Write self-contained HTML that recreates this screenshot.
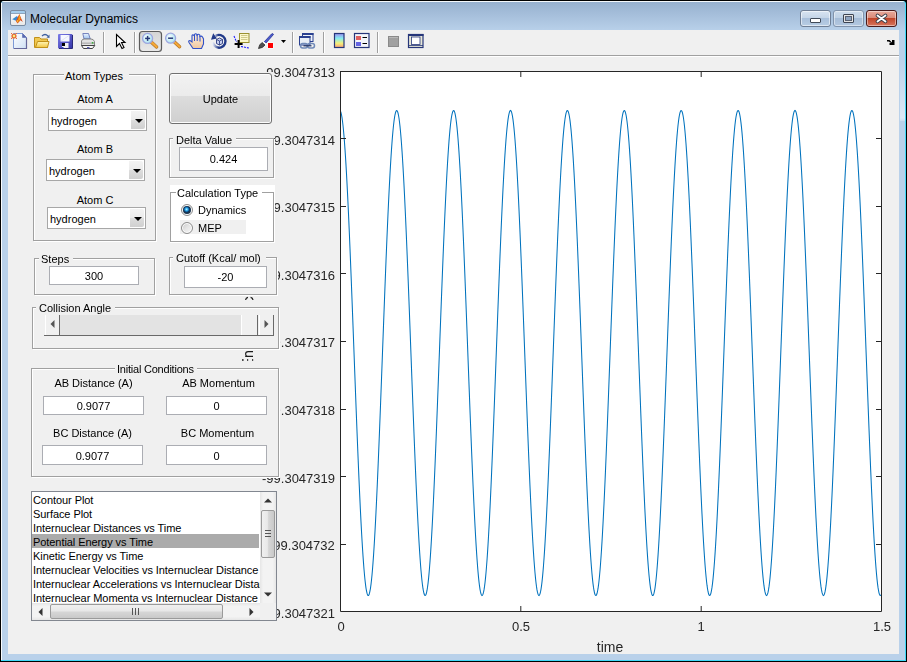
<!DOCTYPE html><html><head><meta charset="utf-8"><style>
*{box-sizing:border-box}
body{margin:0;width:907px;height:662px;overflow:hidden;position:relative;background:#000;font-family:"Liberation Sans", sans-serif}
.abs{position:absolute}
.pnl{position:absolute;border-top:1px solid #a0a0a0;border-left:1px solid #a0a0a0;box-shadow:inset 1px 1px 0 #fff, 1px 1px 0 #fff;}
.pnl2{position:absolute}
.ptitle{position:absolute;font-size:11px;line-height:13px;background:#f0f0f0;padding:0 2px;color:#000;white-space:nowrap}
.lbl{position:absolute;font-size:11px;line-height:13px;color:#000;white-space:nowrap}
.edit{position:absolute;background:#fff;border:1px solid #a0a0a0;font-size:11px;text-align:center;color:#000;box-shadow:inset 0 0 0 0 #fff}
.popup{position:absolute;background:#fff;border:1px solid #a0a0a0;font-size:11px;color:#000}
.pbtn{position:absolute;right:0;top:0;width:17px;height:100%;background:linear-gradient(#f2f2f2,#d5d5d5)}
.tick{position:absolute;font-size:13px;line-height:13px;color:#262626;white-space:nowrap;will-change:transform}
</style></head><body>
<div class="abs" style="left:0;top:0;width:907px;height:662px;background:#000;border-radius:4px 4px 0 0"></div>
<div class="abs" style="left:1px;top:1px;width:905px;height:660px;background:#40d8f8;border-radius:3px 3px 0 0"></div>
<div class="abs" style="left:1px;top:1px;width:904px;height:659px;background:linear-gradient(#f4f8fb 0,#f4f8fb 1px,#97b1cf 1px,#a6bfdb 14px,#b9d1ea 30px,#b9d1ea 100%);border-radius:3px 3px 0 0"></div>
<div class="abs" style="left:2px;top:30px;width:1px;height:630px;background:#b9d1ea"></div>
<div class="abs" style="left:1px;top:3px;width:1px;height:657px;background:#f8fbfd"></div>
<div class="abs" style="left:8px;top:30px;width:891px;height:624px;background:#f0f0f0"></div>
<div class="abs" style="left:900px;top:60px;width:5px;height:61px;background:linear-gradient(#bcd3eb,#dbe8f5 95%,#c9dcef)"></div>

<div class="abs" style="left:10px;top:10px;width:16px;height:16px;background:linear-gradient(#a4cdee 0,#a4cdee 2px,#8ea4bc 2px,#8ea4bc 3px,#fbfbfb 3px,#e8e8e8 100%);border:1px solid #7a8ca2;border-radius:2px"></div>
<svg class="abs" style="left:10px;top:10px" width="16" height="16"><path d="M2.2 9.3 L7 5.9 L8.3 8 L6 10.7 Z" fill="#3a8ad0"/><path d="M5.9 11 L9.4 4 L11 8 L12.8 12 L10.5 10.3 L7.5 13.5 Z" fill="#d9481a"/><path d="M9.4 4.5 L10.6 8.5 L8.6 12.5 L8.2 9 Z" fill="#f2a21c"/><path d="M6.5 11 L8 9.5 L8 12.8 Z" fill="#f6c030"/></svg>
<div class="abs" style="left:30px;top:12px;font-size:12px;line-height:15px;color:#000;white-space:nowrap">Molecular Dynamics</div>

<div class="abs" style="left:800px;top:10px;width:31px;height:17px;border:1px solid #6f7f95;border-radius:3px;background:linear-gradient(#d8e4f1 0,#c3d4e7 50%,#a9c0db 50%,#b8cde4 100%);box-shadow:inset 0 0 0 1px rgba(255,255,255,.55)"></div>
<div class="abs" style="left:810px;top:18px;width:11px;height:5px;background:#fff;border:1px solid #404a58;border-radius:1px"></div>
<div class="abs" style="left:833px;top:10px;width:31px;height:17px;border:1px solid #8193ab;border-radius:3px;background:linear-gradient(#cddcec 0,#bdd0e5 50%,#a6bdd8 50%,#b3c8e0 100%);box-shadow:inset 0 0 0 1px rgba(255,255,255,.45)"></div>
<div class="abs" style="left:843px;top:14px;width:11px;height:9px;background:#e4e4e4;border:1px solid #3d4452;border-radius:1px"></div>
<div class="abs" style="left:846px;top:17px;width:5px;height:3px;background:#8ea4c2;box-shadow:0 0 0 1px #5a6272"></div>
<div class="abs" style="left:866px;top:10px;width:31px;height:17px;border:1px solid #4a1a1a;border-radius:3px;background:linear-gradient(#e9a99b 0,#d98876 50%,#c0452a 50%,#d8755d 100%);box-shadow:inset 0 0 0 1px rgba(255,255,255,.45)"></div>
<svg class="abs" style="left:875px;top:13px" width="13" height="11"><path d="M2.5 2.5 L10.5 8.5 M2.5 8.5 L10.5 2.5" stroke="#3a3f4a" stroke-width="3.6" fill="none" stroke-linecap="round"/><path d="M2.5 2.5 L10.5 8.5 M2.5 8.5 L10.5 2.5" stroke="#fff" stroke-width="1.8" fill="none" stroke-linecap="round"/></svg>

<div class="abs" style="left:8px;top:55px;width:891px;height:1px;background:#a0a0a0"></div><div class="abs" style="left:8px;top:56px;width:891px;height:1px;background:#fff"></div>
<svg class="abs" style="left:0;top:0" width="907" height="57" shape-rendering="geometricPrecision">
<defs>
<linearGradient id="pg" x1="0" y1="0" x2="1" y2="1"><stop offset="0" stop-color="#ffffff"/><stop offset="1" stop-color="#cfe0f4"/></linearGradient>
<linearGradient id="fg" x1="0" y1="0" x2="0" y2="1"><stop offset="0" stop-color="#fff6b8"/><stop offset="1" stop-color="#f2c640"/></linearGradient>
<linearGradient id="flg" x1="0" y1="0" x2="1" y2="1"><stop offset="0" stop-color="#7c7ce8"/><stop offset="1" stop-color="#3434a8"/></linearGradient>
<linearGradient id="cbg" x1="0" y1="0" x2="0" y2="1"><stop offset="0" stop-color="#9a8ef0"/><stop offset=".35" stop-color="#86eef0"/><stop offset=".7" stop-color="#f4f07a"/><stop offset="1" stop-color="#f8a078"/></linearGradient>
<linearGradient id="btng" x1="0" y1="0" x2="0" y2="1"><stop offset="0" stop-color="#d4d4d4"/><stop offset="1" stop-color="#e9e9e9"/></linearGradient>
<radialGradient id="lens" cx=".4" cy=".4" r=".6"><stop offset="0" stop-color="#ffffff"/><stop offset="1" stop-color="#a8e4f0"/></radialGradient>
<linearGradient id="hand" x1="0" y1="0" x2="0" y2="1"><stop offset="0" stop-color="#fdf0e0"/><stop offset="1" stop-color="#f0c8a0"/></linearGradient>
</defs>
<rect x="103" y="32" width="1" height="21" fill="#a0a0a0"/><rect x="104" y="32" width="1" height="21" fill="#fff"/>
<rect x="134" y="32" width="1" height="21" fill="#a0a0a0"/><rect x="135" y="32" width="1" height="21" fill="#fff"/>
<rect x="292" y="32" width="1" height="21" fill="#a0a0a0"/><rect x="293" y="32" width="1" height="21" fill="#fff"/>
<rect x="323" y="32" width="1" height="21" fill="#a0a0a0"/><rect x="324" y="32" width="1" height="21" fill="#fff"/>
<rect x="377" y="32" width="1" height="21" fill="#a0a0a0"/><rect x="378" y="32" width="1" height="21" fill="#fff"/>
<path d="M13.5 33.5 H22.5 L26.5 37.5 V48.5 H13.5 Z" fill="url(#pg)" stroke="#7d9ad6"/>
<path d="M26.5 38 V48.5 H14" fill="none" stroke="#65679a" stroke-width="1.2"/>
<path d="M22.5 33.5 V37.5 H26.5 Z" fill="#5a6ab0" stroke="#5a6ab0" stroke-width=".6"/>
<g fill="#e8703a"><circle cx="14" cy="36" r="2.6"/><rect x="11" y="33" width="1" height="1"/><rect x="16" y="33" width="1" height="1"/><rect x="11" y="38" width="1" height="1"/><rect x="16" y="38" width="1" height="1"/></g><circle cx="14" cy="36" r="1.2" fill="#f8f080"/>
<path d="M34.5 37.5 H39.5 L41 39 H47.5 V47.5 H34.5 Z" fill="#f0c850" stroke="#c0901a"/>
<path d="M35.5 47.5 L37.5 41.5 H49 L47.5 47.5 Z" fill="url(#fg)" stroke="#c0901a"/>
<path d="M42 36 Q45 33 48 36" fill="none" stroke="#4060a0" stroke-width="1.2"/><path d="M46.5 37.5 L49.5 34.5 L49.5 38 Z" fill="#4060a0"/>
<rect x="58" y="34" width="14.5" height="14.5" rx="1" fill="url(#flg)"/>
<path d="M72.5 35 V48.5 H59" fill="none" stroke="#2a2a78" stroke-width="1"/>
<rect x="60.5" y="35" width="9" height="6.5" fill="#f6f8ff"/><path d="M61 41 L69 35.5" stroke="#d8dcf0" stroke-width=".8"/>
<rect x="62" y="43" width="6.5" height="5" fill="#f0f0f4"/><rect x="62" y="43" width="3" height="3" fill="#000"/><rect x="62" y="47" width="1.5" height="1.5" fill="#3040c0"/>
<defs><linearGradient id="ppr" x1="0" y1="0" x2="0" y2="1"><stop offset="0" stop-color="#eaf4ff"/><stop offset="1" stop-color="#9cc0f0"/></linearGradient></defs>
<path d="M82.8 33.5 H88.5 L90.3 39 H84 Z" fill="url(#ppr)" stroke="#5a6ab0" stroke-width=".8"/>
<path d="M81.5 41 Q82 39 84.5 39 H91 Q93.5 39 94.5 41.5 V45.5 H81.5 Z" fill="#e2e2e2" stroke="#7a7a7a" stroke-width=".9"/>
<path d="M82 43.2 H94" stroke="#b4b4b4" stroke-width="1.4"/>
<path d="M81.5 45.5 L83.5 48.5 H92.5 L94.8 45.5 Z" fill="#f6f6f6" stroke="#404040" stroke-width="1"/>
<rect x="91.8" y="42" width="1.6" height="1.6" fill="#40b040"/><rect x="87" y="47" width="2.5" height="1.5" fill="#5a60b0"/>
<path d="M116.5 34.5 V46.5 L119.5 43.5 L122 48.5 L124 47.5 L121.5 42.5 H125 Z" fill="#fff" stroke="#000" stroke-width="1.1" stroke-linejoin="miter"/>
<rect x="139.5" y="31.5" width="22" height="20" rx="3" fill="url(#btng)" stroke="#5c5c5c" stroke-width="1.2"/>
<path d="M150.6 41.4 L156.6 46.9" stroke="#b07020" stroke-width="3.4" stroke-linecap="round"/><path d="M150.6 41.4 L156.6 46.9" stroke="#f4a838" stroke-width="2.2" stroke-linecap="round"/><circle cx="147.6" cy="38.4" r="5" fill="url(#lens)" stroke="#9ea6e0" stroke-width="1.3"/><path d="M145.1 38.4 H150.1" stroke="#253a78" stroke-width="1.5"/><path d="M147.6 35.9 V40.9" stroke="#253a78" stroke-width="1.5"/>
<path d="M173.6 41.2 L179.6 46.7" stroke="#b07020" stroke-width="3.4" stroke-linecap="round"/><path d="M173.6 41.2 L179.6 46.7" stroke="#f4a838" stroke-width="2.2" stroke-linecap="round"/><circle cx="170.6" cy="38.2" r="5" fill="url(#lens)" stroke="#9ea6e0" stroke-width="1.3"/><path d="M168.1 38.2 H173.1" stroke="#253a78" stroke-width="1.5"/>
<path d="M193 48.5 L189 42.5 Q188 40.5 190 40.5 L192 42 V36 Q192 34.5 193.5 35 L194.5 36 V34.5 Q195.5 33 197 34.5 V35 Q198.5 33.5 199.8 35 V36.5 Q201.5 35.5 202.5 37 L203.5 39 V44 L201.5 48.5 Z" fill="url(#hand)" stroke="#3050c8" stroke-width="1.1"/>
<path d="M194.5 36 V41 M197.2 35 V41 M200 36.5 V41.5" stroke="#3050c8" stroke-width="1"/>
<defs><linearGradient id="rotg" x1="0" y1="0" x2="1" y2="0"><stop offset="0" stop-color="#e8ecf8"/><stop offset=".45" stop-color="#223a8a"/></linearGradient></defs>
<path d="M215.5 36 A6.4 6.4 0 1 1 212.8 42.5" fill="none" stroke="url(#rotg)" stroke-width="2.4"/>
<path d="M213.2 33.2 L211 39.8 L217 38.6 Z" fill="#223a8a"/>
<path d="M216.5 39.5 L219.5 38 L222.5 39.5 V43.5 L219.5 45 L216.5 43.5 Z" fill="#c8d0f0" stroke="#2a3a80" stroke-width=".9"/><path d="M216.5 39.5 L219.5 41 L222.5 39.5 M219.5 41 V45" stroke="#2a3a80" stroke-width=".8" fill="none"/>
<rect x="239.5" y="33.5" width="9.5" height="9" fill="#fcf8cc" stroke="#9a9030"/>
<path d="M241 35.5 H247.5 M241 37.5 H247.5 M241 39.5 H247.5" stroke="#c4bc78" stroke-width=".8"/>
<path d="M234 36 L236.5 42 M241 46.5 L249 48" stroke="#1a1aff" stroke-width="1.1" stroke-dasharray="2 1"/>
<path d="M238.6 40 V48 M234.6 44 H242.6" stroke="#000" stroke-width="2"/>
<path d="M264 42 L271.5 34 Q273 33 273.5 34.5 L266 43 Z" fill="#4a5ad0" stroke="#2a3490" stroke-width=".8"/>
<path d="M263.5 42 L266 44.5" stroke="#fff" stroke-width="1.2"/>
<path d="M258.5 48.5 Q259 44.5 262 42.5 L265 45 Q263 48 258.5 48.5 Z" fill="#505050" stroke="#303030" stroke-width=".8"/>
<rect x="267.5" y="42.5" width="6" height="6" fill="#fff"/><rect x="268" y="43" width="5" height="5" fill="#ff0000"/>
<path d="M281 40 H286 L283.5 43 Z" fill="#000"/>
<rect x="302.5" y="33.5" width="10.5" height="8" fill="#f0f4fa" stroke="#2a4090"/><rect x="302" y="33" width="11.5" height="2" fill="#2a4090"/>
<rect x="299.5" y="36.5" width="10.5" height="8.5" fill="#e8eef6" stroke="#2a4090"/><rect x="299" y="36" width="11.5" height="2" fill="#2a4090"/>
<rect x="300.5" y="43.5" width="7" height="4.5" rx="2.2" fill="none" stroke="#708ab8" stroke-width="1.5"/><rect x="307.5" y="43.5" width="7" height="4.5" rx="2.2" fill="none" stroke="#708ab8" stroke-width="1.5"/><path d="M303.5 45.8 H311.5" stroke="#203060" stroke-width="1.2"/>
<rect x="334.5" y="33.5" width="9.5" height="14" fill="url(#cbg)" stroke="#26367a" stroke-width="1.2"/>
<rect x="354.5" y="33.5" width="14.5" height="14" fill="#f4f6fb" stroke="#26367a" stroke-width="1.2"/>
<rect x="356" y="36" width="5" height="4" fill="#e06060"/><rect x="356" y="42" width="5" height="4" fill="#6464e4"/><path d="M362.5 37.5 H367 M362.5 43.5 H367" stroke="#000" stroke-width="1.1"/>
<rect x="388.5" y="36.5" width="10" height="10" fill="#a0a0a0" stroke="#8a8a8a"/><path d="M389 37.5 H398" stroke="#b8b8b8"/>
<rect x="408.5" y="34.5" width="14.5" height="13" fill="#e8e8d8" stroke="#26367a" stroke-width="1.2"/><rect x="408" y="34" width="15.5" height="2" fill="#26367a"/>
<rect x="411.5" y="37" width="8.5" height="7.5" fill="#fff" stroke="#26367a" stroke-width=".8"/><path d="M409 45.5 H423" stroke="#26367a" stroke-width=".8"/>
<path d="M887 40 H889.5 L892 42.5 V40 H894.5 V45 H889.5 V42.8 H891.3 L888.5 41.5 H887 Z" fill="#000"/>
</svg>
<div class="abs" style="left:340px;top:71px;width:542px;height:541px;background:#fff"></div>
<svg class="abs" style="left:0;top:0" width="907" height="662">
<polyline points="340.50,111.22 341.00,112.63 341.50,114.76 342.00,117.62 342.50,121.20 343.00,125.48 343.50,130.46 344.00,136.12 344.50,142.43 345.00,149.39 345.50,156.97 346.00,165.15 346.50,173.90 347.00,183.19 347.50,193.00 348.00,203.30 348.50,214.06 349.00,225.24 349.50,236.81 350.00,248.73 350.50,260.97 351.00,273.49 351.50,286.26 352.00,299.23 352.50,312.36 353.00,325.61 353.50,338.95 354.00,352.33 354.50,365.71 355.00,379.06 355.50,392.32 356.00,405.47 356.50,418.45 357.00,431.24 357.50,443.79 358.00,456.06 358.50,468.01 359.00,479.62 359.50,490.84 360.00,501.64 360.50,511.99 361.00,521.85 361.50,531.20 362.00,540.00 362.50,548.24 363.00,555.88 363.50,562.90 364.00,569.28 364.50,575.00 365.00,580.05 365.50,584.40 366.00,588.05 366.50,590.99 367.00,593.19 367.50,594.67 368.00,595.41 368.50,595.41 369.00,594.67 369.50,593.19 370.00,590.99 370.50,588.05 371.00,584.40 371.50,580.05 372.00,575.00 372.50,569.28 373.00,562.90 373.50,555.88 374.00,548.24 374.50,540.00 375.00,531.20 375.50,521.85 376.00,511.99 376.50,501.64 377.00,490.84 377.50,479.62 378.00,468.01 378.50,456.06 379.00,443.79 379.50,431.24 380.00,418.45 380.50,405.47 381.00,392.32 381.50,379.06 382.00,365.71 382.50,352.33 383.00,338.95 383.50,325.61 384.00,312.36 384.50,299.23 385.00,286.26 385.50,273.49 386.00,260.97 386.50,248.73 387.00,236.81 387.50,225.24 388.00,214.06 388.50,203.30 389.00,193.00 389.50,183.19 390.00,173.90 390.50,165.15 391.00,156.97 391.50,149.39 392.00,142.43 392.50,136.12 393.00,130.46 393.50,125.48 394.00,121.20 394.50,117.62 395.00,114.76 395.50,112.63 396.00,111.22 396.50,110.56 397.00,110.63 397.50,111.45 398.00,112.99 398.50,115.27 399.00,118.28 399.50,122.00 400.00,126.42 400.50,131.54 401.00,137.33 401.50,143.77 402.00,150.86 402.50,158.56 403.00,166.85 403.50,175.71 404.00,185.11 404.50,195.03 405.00,205.42 405.50,216.26 406.00,227.52 406.50,239.17 407.00,251.16 407.50,263.46 408.00,276.03 408.50,288.84 409.00,301.84 409.50,315.00 410.00,328.27 410.50,341.62 411.00,355.01 411.50,368.39 412.00,381.72 412.50,394.96 413.00,408.08 413.50,421.03 414.00,433.77 414.50,446.26 415.00,458.48 415.50,470.36 416.00,481.90 416.50,493.04 417.00,503.75 417.50,514.00 418.00,523.76 418.50,533.00 419.00,541.70 419.50,549.81 420.00,557.33 420.50,564.23 421.00,570.48 421.50,576.07 422.00,580.98 422.50,585.19 423.00,588.70 423.50,591.49 424.00,593.55 424.50,594.88 425.00,595.47 425.50,595.32 426.00,594.43 426.50,592.81 427.00,590.46 427.50,587.38 428.00,583.59 428.50,579.10 429.00,573.91 429.50,568.06 430.00,561.55 430.50,554.40 431.00,546.64 431.50,538.29 432.00,529.37 432.50,519.92 433.00,509.96 433.50,499.52 434.00,488.63 434.50,477.33 435.00,465.65 435.50,453.63 436.00,441.30 436.50,428.70 437.00,415.87 437.50,402.85 438.00,389.68 438.50,376.39 439.00,363.04 439.50,349.65 440.00,336.28 440.50,322.95 441.00,309.72 441.50,296.62 442.00,283.69 442.50,270.97 443.00,258.50 443.50,246.32 444.00,234.47 444.50,222.97 445.00,211.87 445.50,201.21 446.00,191.00 446.50,181.29 447.00,172.10 447.50,163.47 448.00,155.41 448.50,147.95 449.00,141.12 449.50,134.93 450.00,129.41 450.50,124.57 451.00,120.43 451.50,116.99 452.00,114.28 452.50,112.29 453.00,111.03 453.50,110.51 454.00,110.74 454.50,111.70 455.00,113.39 455.50,115.82 456.00,118.97 456.50,122.83 457.00,127.39 457.50,132.64 458.00,138.56 458.50,145.14 459.00,152.35 459.50,160.17 460.00,168.58 460.50,177.55 461.00,187.06 461.50,197.07 462.00,207.55 462.50,218.48 463.00,229.82 463.50,241.54 464.00,253.59 464.50,265.95 465.00,278.57 465.50,291.42 466.00,304.46 466.50,317.65 467.00,330.94 467.50,344.30 468.00,357.69 468.50,371.06 469.00,384.38 469.50,397.60 470.00,410.68 470.50,423.59 471.00,436.29 471.50,448.73 472.00,460.88 472.50,472.70 473.00,484.16 473.50,495.21 474.00,505.84 474.50,515.99 475.00,525.65 475.50,534.79 476.00,543.37 476.50,551.37 477.00,558.76 477.50,565.53 478.00,571.65 478.50,577.10 479.00,581.88 479.50,585.95 480.00,589.31 480.50,591.96 481.00,593.87 481.50,595.05 482.00,595.50 482.50,595.20 483.00,594.17 483.50,592.40 484.00,589.90 484.50,586.68 485.00,582.75 485.50,578.11 486.00,572.80 486.50,566.81 487.00,560.17 487.50,552.89 488.00,545.01 488.50,536.55 489.00,527.52 489.50,517.97 490.00,507.91 490.50,497.37 491.00,486.40 491.50,475.02 492.00,463.27 492.50,451.18 493.00,438.80 493.50,426.15 494.00,413.28 494.50,400.23 495.00,387.03 495.50,373.73 496.00,360.36 496.50,346.98 497.00,333.61 497.50,320.30 498.00,307.09 498.50,294.02 499.00,281.13 499.50,268.45 500.00,256.04 500.50,243.92 501.00,232.14 501.50,220.72 502.00,209.70 502.50,199.13 503.00,189.02 503.50,179.41 504.00,170.33 504.50,161.81 505.00,153.87 505.50,146.53 506.00,139.83 506.50,133.77 507.00,128.39 507.50,123.69 508.00,119.68 508.50,116.39 509.00,113.82 509.50,111.98 510.00,110.87 510.50,110.50 511.00,110.87 511.50,111.98 512.00,113.82 512.50,116.39 513.00,119.68 513.50,123.69 514.00,128.39 514.50,133.77 515.00,139.83 515.50,146.53 516.00,153.87 516.50,161.81 517.00,170.33 517.50,179.41 518.00,189.02 518.50,199.13 519.00,209.70 519.50,220.72 520.00,232.14 520.50,243.92 521.00,256.04 521.50,268.45 522.00,281.13 522.50,294.02 523.00,307.09 523.50,320.30 524.00,333.61 524.50,346.98 525.00,360.36 525.50,373.73 526.00,387.03 526.50,400.23 527.00,413.28 527.50,426.15 528.00,438.80 528.50,451.18 529.00,463.27 529.50,475.02 530.00,486.40 530.50,497.37 531.00,507.91 531.50,517.97 532.00,527.52 532.50,536.55 533.00,545.01 533.50,552.89 534.00,560.17 534.50,566.81 535.00,572.80 535.50,578.11 536.00,582.75 536.50,586.68 537.00,589.90 537.50,592.40 538.00,594.17 538.50,595.20 539.00,595.50 539.50,595.05 540.00,593.87 540.50,591.96 541.00,589.31 541.50,585.95 542.00,581.88 542.50,577.10 543.00,571.65 543.50,565.53 544.00,558.76 544.50,551.37 545.00,543.37 545.50,534.79 546.00,525.65 546.50,515.99 547.00,505.84 547.50,495.21 548.00,484.16 548.50,472.70 549.00,460.88 549.50,448.73 550.00,436.29 550.50,423.59 551.00,410.68 551.50,397.60 552.00,384.38 552.50,371.06 553.00,357.69 553.50,344.30 554.00,330.94 554.50,317.65 555.00,304.46 555.50,291.42 556.00,278.57 556.50,265.95 557.00,253.59 557.50,241.54 558.00,229.82 558.50,218.48 559.00,207.55 559.50,197.07 560.00,187.06 560.50,177.55 561.00,168.58 561.50,160.17 562.00,152.35 562.50,145.14 563.00,138.56 563.50,132.64 564.00,127.39 564.50,122.83 565.00,118.97 565.50,115.82 566.00,113.39 566.50,111.70 567.00,110.74 567.50,110.51 568.00,111.03 568.50,112.29 569.00,114.28 569.50,116.99 570.00,120.43 570.50,124.57 571.00,129.41 571.50,134.93 572.00,141.12 572.50,147.95 573.00,155.41 573.50,163.47 574.00,172.10 574.50,181.29 575.00,191.00 575.50,201.21 576.00,211.87 576.50,222.97 577.00,234.47 577.50,246.32 578.00,258.50 578.50,270.97 579.00,283.69 579.50,296.62 580.00,309.72 580.50,322.95 581.00,336.28 581.50,349.65 582.00,363.04 582.50,376.39 583.00,389.68 583.50,402.85 584.00,415.87 584.50,428.70 585.00,441.30 585.50,453.63 586.00,465.65 586.50,477.33 587.00,488.63 587.50,499.52 588.00,509.96 588.50,519.92 589.00,529.37 589.50,538.29 590.00,546.64 590.50,554.40 591.00,561.55 591.50,568.06 592.00,573.91 592.50,579.10 593.00,583.59 593.50,587.38 594.00,590.46 594.50,592.81 595.00,594.43 595.50,595.32 596.00,595.47 596.50,594.88 597.00,593.55 597.50,591.49 598.00,588.70 598.50,585.19 599.00,580.98 599.50,576.07 600.00,570.48 600.50,564.23 601.00,557.33 601.50,549.81 602.00,541.70 602.50,533.00 603.00,523.76 603.50,514.00 604.00,503.75 604.50,493.04 605.00,481.90 605.50,470.36 606.00,458.48 606.50,446.26 607.00,433.77 607.50,421.03 608.00,408.08 608.50,394.96 609.00,381.72 609.50,368.39 610.00,355.01 610.50,341.62 611.00,328.27 611.50,315.00 612.00,301.84 612.50,288.84 613.00,276.03 613.50,263.46 614.00,251.16 614.50,239.17 615.00,227.52 615.50,216.26 616.00,205.42 616.50,195.03 617.00,185.11 617.50,175.71 618.00,166.85 618.50,158.56 619.00,150.86 619.50,143.77 620.00,137.33 620.50,131.54 621.00,126.42 621.50,122.00 622.00,118.28 622.50,115.27 623.00,112.99 623.50,111.45 624.00,110.63 624.50,110.56 625.00,111.22 625.50,112.63 626.00,114.76 626.50,117.62 627.00,121.20 627.50,125.48 628.00,130.46 628.50,136.12 629.00,142.43 629.50,149.39 630.00,156.97 630.50,165.15 631.00,173.90 631.50,183.19 632.00,193.00 632.50,203.30 633.00,214.06 633.50,225.24 634.00,236.81 634.50,248.73 635.00,260.97 635.50,273.49 636.00,286.26 636.50,299.23 637.00,312.36 637.50,325.61 638.00,338.95 638.50,352.33 639.00,365.71 639.50,379.06 640.00,392.32 640.50,405.47 641.00,418.45 641.50,431.24 642.00,443.79 642.50,456.06 643.00,468.01 643.50,479.62 644.00,490.84 644.50,501.64 645.00,511.99 645.50,521.85 646.00,531.20 646.50,540.00 647.00,548.24 647.50,555.88 648.00,562.90 648.50,569.28 649.00,575.00 649.50,580.05 650.00,584.40 650.50,588.05 651.00,590.99 651.50,593.19 652.00,594.67 652.50,595.41 653.00,595.41 653.50,594.67 654.00,593.19 654.50,590.99 655.00,588.05 655.50,584.40 656.00,580.05 656.50,575.00 657.00,569.28 657.50,562.90 658.00,555.88 658.50,548.24 659.00,540.00 659.50,531.20 660.00,521.85 660.50,511.99 661.00,501.64 661.50,490.84 662.00,479.62 662.50,468.01 663.00,456.06 663.50,443.79 664.00,431.24 664.50,418.45 665.00,405.47 665.50,392.32 666.00,379.06 666.50,365.71 667.00,352.33 667.50,338.95 668.00,325.61 668.50,312.36 669.00,299.23 669.50,286.26 670.00,273.49 670.50,260.97 671.00,248.73 671.50,236.81 672.00,225.24 672.50,214.06 673.00,203.30 673.50,193.00 674.00,183.19 674.50,173.90 675.00,165.15 675.50,156.97 676.00,149.39 676.50,142.43 677.00,136.12 677.50,130.46 678.00,125.48 678.50,121.20 679.00,117.62 679.50,114.76 680.00,112.63 680.50,111.22 681.00,110.56 681.50,110.63 682.00,111.45 682.50,112.99 683.00,115.27 683.50,118.28 684.00,122.00 684.50,126.42 685.00,131.54 685.50,137.33 686.00,143.77 686.50,150.86 687.00,158.56 687.50,166.85 688.00,175.71 688.50,185.11 689.00,195.03 689.50,205.42 690.00,216.26 690.50,227.52 691.00,239.17 691.50,251.16 692.00,263.46 692.50,276.03 693.00,288.84 693.50,301.84 694.00,315.00 694.50,328.27 695.00,341.62 695.50,355.01 696.00,368.39 696.50,381.72 697.00,394.96 697.50,408.08 698.00,421.03 698.50,433.77 699.00,446.26 699.50,458.48 700.00,470.36 700.50,481.90 701.00,493.04 701.50,503.75 702.00,514.00 702.50,523.76 703.00,533.00 703.50,541.70 704.00,549.81 704.50,557.33 705.00,564.23 705.50,570.48 706.00,576.07 706.50,580.98 707.00,585.19 707.50,588.70 708.00,591.49 708.50,593.55 709.00,594.88 709.50,595.47 710.00,595.32 710.50,594.43 711.00,592.81 711.50,590.46 712.00,587.38 712.50,583.59 713.00,579.10 713.50,573.91 714.00,568.06 714.50,561.55 715.00,554.40 715.50,546.64 716.00,538.29 716.50,529.37 717.00,519.92 717.50,509.96 718.00,499.52 718.50,488.63 719.00,477.33 719.50,465.65 720.00,453.63 720.50,441.30 721.00,428.70 721.50,415.87 722.00,402.85 722.50,389.68 723.00,376.39 723.50,363.04 724.00,349.65 724.50,336.28 725.00,322.95 725.50,309.72 726.00,296.62 726.50,283.69 727.00,270.97 727.50,258.50 728.00,246.32 728.50,234.47 729.00,222.97 729.50,211.87 730.00,201.21 730.50,191.00 731.00,181.29 731.50,172.10 732.00,163.47 732.50,155.41 733.00,147.95 733.50,141.12 734.00,134.93 734.50,129.41 735.00,124.57 735.50,120.43 736.00,116.99 736.50,114.28 737.00,112.29 737.50,111.03 738.00,110.51 738.50,110.74 739.00,111.70 739.50,113.39 740.00,115.82 740.50,118.97 741.00,122.83 741.50,127.39 742.00,132.64 742.50,138.56 743.00,145.14 743.50,152.35 744.00,160.17 744.50,168.58 745.00,177.55 745.50,187.06 746.00,197.07 746.50,207.55 747.00,218.48 747.50,229.82 748.00,241.54 748.50,253.59 749.00,265.95 749.50,278.57 750.00,291.42 750.50,304.46 751.00,317.65 751.50,330.94 752.00,344.30 752.50,357.69 753.00,371.06 753.50,384.38 754.00,397.60 754.50,410.68 755.00,423.59 755.50,436.29 756.00,448.73 756.50,460.88 757.00,472.70 757.50,484.16 758.00,495.21 758.50,505.84 759.00,515.99 759.50,525.65 760.00,534.79 760.50,543.37 761.00,551.37 761.50,558.76 762.00,565.53 762.50,571.65 763.00,577.10 763.50,581.88 764.00,585.95 764.50,589.31 765.00,591.96 765.50,593.87 766.00,595.05 766.50,595.50 767.00,595.20 767.50,594.17 768.00,592.40 768.50,589.90 769.00,586.68 769.50,582.75 770.00,578.11 770.50,572.80 771.00,566.81 771.50,560.17 772.00,552.89 772.50,545.01 773.00,536.55 773.50,527.52 774.00,517.97 774.50,507.91 775.00,497.37 775.50,486.40 776.00,475.02 776.50,463.27 777.00,451.18 777.50,438.80 778.00,426.15 778.50,413.28 779.00,400.23 779.50,387.03 780.00,373.73 780.50,360.36 781.00,346.98 781.50,333.61 782.00,320.30 782.50,307.09 783.00,294.02 783.50,281.13 784.00,268.45 784.50,256.04 785.00,243.92 785.50,232.14 786.00,220.72 786.50,209.70 787.00,199.13 787.50,189.02 788.00,179.41 788.50,170.33 789.00,161.81 789.50,153.87 790.00,146.53 790.50,139.83 791.00,133.77 791.50,128.39 792.00,123.69 792.50,119.68 793.00,116.39 793.50,113.82 794.00,111.98 794.50,110.87 795.00,110.50 795.50,110.87 796.00,111.98 796.50,113.82 797.00,116.39 797.50,119.68 798.00,123.69 798.50,128.39 799.00,133.77 799.50,139.83 800.00,146.53 800.50,153.87 801.00,161.81 801.50,170.33 802.00,179.41 802.50,189.02 803.00,199.13 803.50,209.70 804.00,220.72 804.50,232.14 805.00,243.92 805.50,256.04 806.00,268.45 806.50,281.13 807.00,294.02 807.50,307.09 808.00,320.30 808.50,333.61 809.00,346.98 809.50,360.36 810.00,373.73 810.50,387.03 811.00,400.23 811.50,413.28 812.00,426.15 812.50,438.80 813.00,451.18 813.50,463.27 814.00,475.02 814.50,486.40 815.00,497.37 815.50,507.91 816.00,517.97 816.50,527.52 817.00,536.55 817.50,545.01 818.00,552.89 818.50,560.17 819.00,566.81 819.50,572.80 820.00,578.11 820.50,582.75 821.00,586.68 821.50,589.90 822.00,592.40 822.50,594.17 823.00,595.20 823.50,595.50 824.00,595.05 824.50,593.87 825.00,591.96 825.50,589.31 826.00,585.95 826.50,581.88 827.00,577.10 827.50,571.65 828.00,565.53 828.50,558.76 829.00,551.37 829.50,543.37 830.00,534.79 830.50,525.65 831.00,515.99 831.50,505.84 832.00,495.21 832.50,484.16 833.00,472.70 833.50,460.88 834.00,448.73 834.50,436.29 835.00,423.59 835.50,410.68 836.00,397.60 836.50,384.38 837.00,371.06 837.50,357.69 838.00,344.30 838.50,330.94 839.00,317.65 839.50,304.46 840.00,291.42 840.50,278.57 841.00,265.95 841.50,253.59 842.00,241.54 842.50,229.82 843.00,218.48 843.50,207.55 844.00,197.07 844.50,187.06 845.00,177.55 845.50,168.58 846.00,160.17 846.50,152.35 847.00,145.14 847.50,138.56 848.00,132.64 848.50,127.39 849.00,122.83 849.50,118.97 850.00,115.82 850.50,113.39 851.00,111.70 851.50,110.74 852.00,110.51 852.50,111.03 853.00,112.29 853.50,114.28 854.00,116.99 854.50,120.43 855.00,124.57 855.50,129.41 856.00,134.93 856.50,141.12 857.00,147.95 857.50,155.41 858.00,163.47 858.50,172.10 859.00,181.29 859.50,191.00 860.00,201.21 860.50,211.87 861.00,222.97 861.50,234.47 862.00,246.32 862.50,258.50 863.00,270.97 863.50,283.69 864.00,296.62 864.50,309.72 865.00,322.95 865.50,336.28 866.00,349.65 866.50,363.04 867.00,376.39 867.50,389.68 868.00,402.85 868.50,415.87 869.00,428.70 869.50,441.30 870.00,453.63 870.50,465.65 871.00,477.33 871.50,488.63 872.00,499.52 872.50,509.96 873.00,519.92 873.50,529.37 874.00,538.29 874.50,546.64 875.00,554.40 875.50,561.55 876.00,568.06 876.50,573.91 877.00,579.10 877.50,583.59 878.00,587.38 878.50,590.46 879.00,592.81 879.50,594.43 880.00,595.32 880.50,595.47 881.00,594.88" fill="none" stroke="#0072bd" stroke-width="1.05"/>
<path d="M340.5 71 V611.5 H881.5 V71.5 H340" fill="none" stroke="#262626" stroke-width="1"/>

<path d="M341 71.5 h5 M881 71.5 h-5 M341 138.5 h5 M881 138.5 h-5 M341 206.5 h5 M881 206.5 h-5 M341 273.5 h5 M881 273.5 h-5 M341 341.5 h5 M881 341.5 h-5 M341 409.5 h5 M881 409.5 h-5 M341 476.5 h5 M881 476.5 h-5 M341 544.5 h5 M881 544.5 h-5 M341 611.5 h5 M881 611.5 h-5 M340.5 611 v-5 M340.5 72 v5 M520.8 611 v-5 M520.8 72 v5 M701.2 611 v-5 M701.2 72 v5 M881.5 611 v-5 M881.5 72 v5" stroke="#262626" stroke-width="1" fill="none"/></svg>
<div class="tick" style="right:572px;top:66px">-99.3047313</div>
<div class="tick" style="right:572px;top:134px">-99.3047314</div>
<div class="tick" style="right:572px;top:201px">-99.3047315</div>
<div class="tick" style="right:572px;top:269px">-99.3047316</div>
<div class="tick" style="right:572px;top:336px">-99.3047317</div>
<div class="tick" style="right:572px;top:404px">-99.3047318</div>
<div class="tick" style="right:572px;top:472px">-99.3047319</div>
<div class="tick" style="right:572px;top:539px">-99.304732</div>
<div class="tick" style="right:572px;top:607px">-99.3047321</div>
<div class="tick" style="left:300.5px;width:80px;text-align:center;top:620px">0</div>
<div class="tick" style="left:480.8px;width:80px;text-align:center;top:620px">0.5</div>
<div class="tick" style="left:661.2px;width:80px;text-align:center;top:620px">1</div>
<div class="tick" style="left:841.5px;width:80px;text-align:center;top:620px">1.5</div>
<div class="tick" style="left:570px;width:80px;text-align:center;top:639px;font-size:14px;line-height:16px">time</div>
<div class="abs" style="left:33px;top:67px;width:124px;height:7px;background:#f0f0f0"></div><div class="abs" style="left:33px;top:74px;width:123px;height:167px;background:#f0f0f0;border:1px solid #a0a0a0;box-shadow:inset 1px 1px 0 #fff,1px 1px 0 #fff"></div>
<div class="abs" style="left:64px;top:73px;width:65px;height:4px;background:#f0f0f0"></div>
<div class="lbl" style="left:65px;top:70px;">Atom Types</div>
<div class="lbl" style="left:-5px;width:200px;text-align:center;top:93px;">Atom A</div>
<div class="abs" style="left:48px;top:109px;width:99px;height:22px;background:#fff;border:1px solid #a7a7a7"></div><div class="abs" style="left:131px;top:111px;width:14px;height:18px;border-radius:0 2px 2px 0;background:linear-gradient(#f3f3f3 0,#ebebeb 50%,#dddddd 50%,#d0d0d0 100%)"></div><svg class="abs" style="left:135px;top:119px" width="8" height="4"><path d="M0 0H8L4 4Z" fill="#000"/></svg><div class="lbl" style="left:51px;top:115px;">hydrogen</div>
<div class="lbl" style="left:-5px;width:200px;text-align:center;top:143px;">Atom B</div>
<div class="abs" style="left:46px;top:159px;width:99px;height:22px;background:#fff;border:1px solid #a7a7a7"></div><div class="abs" style="left:129px;top:161px;width:14px;height:18px;border-radius:0 2px 2px 0;background:linear-gradient(#f3f3f3 0,#ebebeb 50%,#dddddd 50%,#d0d0d0 100%)"></div><svg class="abs" style="left:133px;top:169px" width="8" height="4"><path d="M0 0H8L4 4Z" fill="#000"/></svg><div class="lbl" style="left:49px;top:165px;">hydrogen</div>
<div class="lbl" style="left:-5px;width:200px;text-align:center;top:194px;">Atom C</div>
<div class="abs" style="left:47px;top:207px;width:99px;height:22px;background:#fff;border:1px solid #a7a7a7"></div><div class="abs" style="left:130px;top:209px;width:14px;height:18px;border-radius:0 2px 2px 0;background:linear-gradient(#f3f3f3 0,#ebebeb 50%,#dddddd 50%,#d0d0d0 100%)"></div><svg class="abs" style="left:134px;top:217px" width="8" height="4"><path d="M0 0H8L4 4Z" fill="#000"/></svg><div class="lbl" style="left:50px;top:213px;">hydrogen</div>
<div class="abs" style="left:168px;top:72px;width:105px;height:53px;background:#f0f0f0"></div>
<div class="abs" style="left:169px;top:73px;width:103px;height:51px;border:1px solid #707070;border-radius:3px;background:linear-gradient(#f2f2f2 0,#ebebeb 45%,#dddddd 45%,#cfcfcf 100%);box-shadow:inset 0 0 0 1px #fcfcfc"></div>
<div class="lbl" style="left:120.5px;width:200px;text-align:center;top:93px;">Update</div>
<div class="abs" style="left:169px;top:131px;width:106px;height:7px;background:#f0f0f0"></div><div class="abs" style="left:169px;top:138px;width:105px;height:40px;background:#f0f0f0;border:1px solid #a0a0a0;box-shadow:inset 1px 1px 0 #fff,1px 1px 0 #fff"></div>
<div class="abs" style="left:173px;top:137px;width:63px;height:4px;background:#f0f0f0"></div>
<div class="lbl" style="left:176px;top:134px;">Delta Value</div>
<div class="abs" style="left:179px;top:147px;width:89px;height:24px;background:#fff;border:1px solid #abadb3"></div><div class="lbl" style="left:123.5px;width:200px;text-align:center;top:153px;">0.424</div>
<div class="abs" style="left:170px;top:185px;width:105px;height:58px;background:#fff"></div>
<div class="abs" style="left:170px;top:192px;width:104px;height:50px;border:1px solid #a0a0a0"></div>
<div class="abs" style="left:176px;top:191px;width:86px;height:4px;background:#fff"></div>
<div class="lbl" style="left:177px;top:187px;">Calculation Type</div>
<div class="abs" style="left:181px;top:204px;width:12px;height:12px;border-radius:50%;background:linear-gradient(135deg,#c8c8c8 0,#e6e6e6 50%,#f6f6f6 100%);border:1px solid #8c8c8c;box-shadow:inset 0 0 0 1px #fff"></div><div class="abs" style="left:183px;top:206px;width:8px;height:8px;border-radius:50%;background:radial-gradient(circle closest-side at 45% 42%,#c0f4ff 0,#40b8f0 35%,#1478c0 60%,#0c3c66 82%,#1a3550 100%)"></div>
<div class="lbl" style="left:198px;top:204px;">Dynamics</div>
<div class="abs" style="left:180px;top:220px;width:66px;height:14px;background:#f0f0f0"></div>
<div class="abs" style="left:181px;top:222px;width:12px;height:12px;border-radius:50%;background:linear-gradient(135deg,#c8c8c8 0,#e6e6e6 50%,#f6f6f6 100%);border:1px solid #8c8c8c;box-shadow:inset 0 0 0 1px #fff"></div>
<div class="lbl" style="left:198px;top:222px;">MEP</div>
<div class="abs" style="left:34px;top:251px;width:122px;height:7px;background:#f0f0f0"></div><div class="abs" style="left:34px;top:258px;width:121px;height:37px;background:#f0f0f0;border:1px solid #a0a0a0;box-shadow:inset 1px 1px 0 #fff,1px 1px 0 #fff"></div>
<div class="abs" style="left:39px;top:257px;width:34px;height:4px;background:#f0f0f0"></div>
<div class="lbl" style="left:41px;top:253px;">Steps</div>
<div class="abs" style="left:49px;top:266px;width:90px;height:19px;background:#fff;border:1px solid #abadb3"></div><div class="lbl" style="left:-6.0px;width:200px;text-align:center;top:270px;">300</div>
<div class="abs" style="left:169px;top:250px;width:109px;height:7px;background:#f0f0f0"></div><div class="abs" style="left:169px;top:257px;width:108px;height:38px;background:#f0f0f0;border:1px solid #a0a0a0;box-shadow:inset 1px 1px 0 #fff,1px 1px 0 #fff"></div>
<div class="abs" style="left:173px;top:256px;width:93px;height:4px;background:#f0f0f0"></div>
<div class="lbl" style="left:176px;top:252px;">Cutoff (Kcal/ mol)</div>
<div class="abs" style="left:184px;top:266px;width:83px;height:22px;background:#fff;border:1px solid #abadb3"></div><div class="lbl" style="left:125.5px;width:200px;text-align:center;top:271px;">-20</div>
<div class="abs" style="left:32px;top:300px;width:248px;height:7px;background:#f0f0f0"></div><div class="abs" style="left:32px;top:307px;width:247px;height:42px;background:#f0f0f0;border:1px solid #a0a0a0;box-shadow:inset 1px 1px 0 #fff,1px 1px 0 #fff"></div>
<div class="abs" style="left:36px;top:306px;width:79px;height:4px;background:#f0f0f0"></div>
<div class="lbl" style="left:39px;top:302px;">Collision Angle</div>
<div class="abs" style="left:44px;top:315px;width:230px;height:21px;background:#f0f0f0"></div>
<div class="abs" style="left:60px;top:315px;width:181px;height:20px;background:#e3e3e3"></div>
<div class="abs" style="left:45px;top:315px;width:1px;height:20px;background:#fff"></div>
<div class="abs" style="left:241px;top:315px;width:1px;height:20px;background:#fff"></div>
<div class="abs" style="left:259px;top:315px;width:1px;height:20px;background:#fff"></div>
<div class="abs" style="left:59px;top:315px;width:1px;height:21px;background:#696969"></div>
<div class="abs" style="left:257px;top:315px;width:1px;height:21px;background:#696969"></div>
<div class="abs" style="left:273px;top:315px;width:1px;height:21px;background:#696969"></div>
<div class="abs" style="left:44px;top:335px;width:230px;height:1px;background:#696969"></div>
<svg class="abs" style="left:50px;top:320px" width="5" height="8"><path d="M4.5 0V8L0.5 4Z" fill="#555"/></svg>
<svg class="abs" style="left:264px;top:320px" width="5" height="8"><path d="M0.5 0V8L4.5 4Z" fill="#555"/></svg>
<svg class="abs" style="left:0;top:0" width="300" height="370"><path d="M245.6 300 Q245.8 297.6 248 297.3 M250.6 297.3 Q252.8 297.6 253 300" fill="none" stroke="#1a1a1a" stroke-width="1.2"/><path d="M253 351.6 H248.2 Q245.6 351.6 245.6 354 Q245.6 356.2 247.5 356.4 H253 M245.2 356.4 H247.5" fill="none" stroke="#1a1a1a" stroke-width="1.1"/><rect x="242" y="359.2" width="1.6" height="1.6" fill="#222"/><rect x="247" y="359.2" width="1.2" height="1.6" fill="#222"/><rect x="252" y="359.2" width="1.2" height="1.6" fill="#222"/></svg>
<div class="abs" style="left:31px;top:361px;width:249px;height:7px;background:#f0f0f0"></div><div class="abs" style="left:31px;top:368px;width:248px;height:109px;background:#f0f0f0;border:1px solid #a0a0a0;box-shadow:inset 1px 1px 0 #fff,1px 1px 0 #fff"></div>
<div class="abs" style="left:115px;top:367px;width:82px;height:4px;background:#f0f0f0"></div>
<div class="lbl" style="left:117px;top:363px;letter-spacing:-0.22px">Initial Conditions</div>
<div class="lbl" style="left:-6.5px;width:200px;text-align:center;top:377px;">AB Distance (A)</div>
<div class="lbl" style="left:118.5px;width:200px;text-align:center;top:377px;">AB Momentum</div>
<div class="abs" style="left:43px;top:396px;width:101px;height:19px;background:#fff;border:1px solid #abadb3"></div><div class="lbl" style="left:-6.5px;width:200px;text-align:center;top:400px;">0.9077</div>
<div class="abs" style="left:166px;top:396px;width:101px;height:19px;background:#fff;border:1px solid #abadb3"></div><div class="lbl" style="left:116.5px;width:200px;text-align:center;top:400px;">0</div>
<div class="lbl" style="left:-7.5px;width:200px;text-align:center;top:427px;">BC Distance (A)</div>
<div class="lbl" style="left:117.5px;width:200px;text-align:center;top:427px;">BC Momentum</div>
<div class="abs" style="left:42px;top:445px;width:101px;height:20px;background:#fff;border:1px solid #abadb3"></div><div class="lbl" style="left:-7.5px;width:200px;text-align:center;top:450px;">0.9077</div>
<div class="abs" style="left:166px;top:445px;width:101px;height:20px;background:#fff;border:1px solid #abadb3"></div><div class="lbl" style="left:116.5px;width:200px;text-align:center;top:450px;">0</div>
<div class="abs" style="left:31px;top:491px;width:246px;height:130px;background:#fff;border:1px solid #828790"></div>
<div class="abs" style="left:32px;top:492px;width:228px;height:111px;overflow:hidden">
<div class="abs" style="left:0;top:42px;width:227px;height:14px;background:#ababab"></div>
<div class="lbl" style="left:1px;top:2px;letter-spacing:-0.07px">Contour Plot</div>
<div class="lbl" style="left:1px;top:16px;letter-spacing:-0.07px">Surface Plot</div>
<div class="lbl" style="left:1px;top:30px;letter-spacing:-0.07px">Internuclear Distances vs Time</div>
<div class="lbl" style="left:1px;top:44px;letter-spacing:-0.07px">Potential Energy vs Time</div>
<div class="lbl" style="left:1px;top:58px;letter-spacing:-0.07px">Kinetic Energy vs Time</div>
<div class="lbl" style="left:1px;top:72px;letter-spacing:-0.07px">Internuclear Velocities vs Internuclear Distance</div>
<div class="lbl" style="left:1px;top:86px;letter-spacing:-0.07px">Internuclear Accelerations vs Internuclear Distance</div>
<div class="lbl" style="left:1px;top:100px;letter-spacing:-0.07px">Internuclear Momenta vs Internuclear Distance</div>
</div>
<div class="abs" style="left:260px;top:492px;width:16px;height:111px;background:linear-gradient(90deg,#e6e6e6,#f3f3f3 20%,#f3f3f3 80%,#e6e6e6)"></div>
<svg class="abs" style="left:264px;top:498px" width="8" height="5"><path d="M0 4.5H8L4 0.5Z" fill="#333"/></svg>
<svg class="abs" style="left:264px;top:592px" width="8" height="5"><path d="M0 0.5H8L4 4.5Z" fill="#333"/></svg>
<div class="abs" style="left:261px;top:510px;width:14px;height:48px;border:1px solid #9a9a9a;border-radius:2px;background:linear-gradient(90deg,#f0f0f0 0,#e8e8e8 45%,#d6d6d6 55%,#c9c9c9 100%)"></div>
<div class="abs" style="left:265px;top:530px;width:6px;height:7px;border-top:1px solid #555;border-bottom:1px solid #555"></div><div class="abs" style="left:265px;top:533px;width:6px;height:1px;background:#555"></div>
<div class="abs" style="left:32px;top:603px;width:228px;height:17px;background:linear-gradient(#e6e6e6,#f3f3f3 20%,#f3f3f3 80%,#e6e6e6)"></div>
<div class="abs" style="left:260px;top:603px;width:16px;height:17px;background:#f0f0f0"></div>
<svg class="abs" style="left:38px;top:608px" width="5" height="8"><path d="M4.5 0V8L0.5 4Z" fill="#333"/></svg>
<svg class="abs" style="left:249px;top:608px" width="5" height="8"><path d="M0.5 0V8L4.5 4Z" fill="#333"/></svg>
<div class="abs" style="left:50px;top:604px;width:173px;height:15px;border:1px solid #9a9a9a;border-radius:2px;background:linear-gradient(#f0f0f0 0,#e8e8e8 45%,#d6d6d6 55%,#c9c9c9 100%)"></div>
<div class="abs" style="left:132px;top:608px;width:7px;height:7px;border-left:1px solid #555;border-right:1px solid #555"></div><div class="abs" style="left:135px;top:608px;width:1px;height:7px;background:#555"></div>
</body></html>
